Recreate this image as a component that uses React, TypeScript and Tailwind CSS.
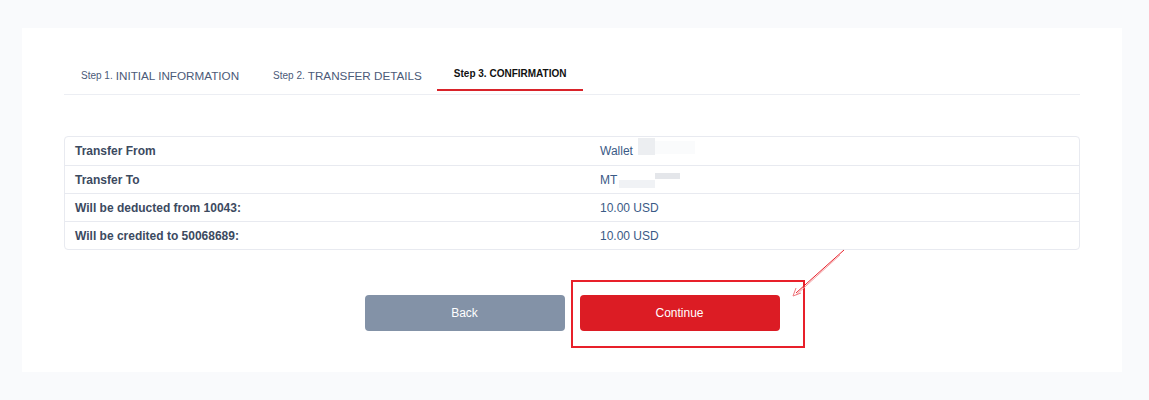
import React from "react";

const rows = [
  { label: "Transfer From", value: "Wallet", mask: "wallet" },
  { label: "Transfer To", value: "MT", mask: "mt" },
  { label: "Will be deducted from 10043:", value: "10.00 USD" },
  { label: "Will be credited to 50068689:", value: "10.00 USD" },
];

export default function App() {
  return (
    <div
      className="min-h-[400px] bg-[#f9fafc] pt-[28px] pl-[22px]"
      style={{ fontFamily: '"Liberation Sans", Arial, sans-serif' }}
    >
      <div className="relative w-[1100px] h-[344px] bg-white px-[42px]">
        {/* steps */}
        <div className="flex h-[67px] border-b border-[#eceef3]">
          <div className="flex items-center h-[63px] px-[17px] pt-[32px] text-[#4b5a78] whitespace-nowrap">
            <span className="text-[10px] mr-[3px]">Step 1.</span>
            <span className="text-[11.7px]">INITIAL INFORMATION</span>
          </div>
          <div className="flex items-center h-[63px] pl-[17px] pr-[15px] pt-[32px] text-[#4b5a78] whitespace-nowrap">
            <span className="text-[10px] mr-[3px]">Step 2.</span>
            <span className="text-[11.7px]">TRANSFER DETAILS</span>
          </div>
          <div className="flex items-center h-[63px] px-[17px] pt-[30px] border-b-[2px] border-[#d9232a] whitespace-nowrap">
            <span className="text-[10px] font-bold text-[#111]">Step 3. CONFIRMATION</span>
          </div>
        </div>

        {/* summary table */}
        <div className="mt-[41px] border border-[#e8eaf0] rounded-[4px]">
          {rows.map((r, i) => (
            <div
              key={r.label}
              className={`flex h-[28px] items-center ${i > 0 ? "border-t border-[#e8eaf0]" : ""}`}
            >
              <div className="w-[535px] pl-[10px] text-[12px] font-bold text-[#3c4a5f]">{r.label}</div>
              <div className="relative flex-1 text-[12px] text-[#3a5a86]">
                {r.value}
                {r.mask === "wallet" && (
                  <>
                    <span className="absolute left-[38px] top-[-4px] w-[17px] h-[17px] bg-[#eceef1]" />
                    <span className="absolute left-[55px] top-[-1px] w-[40px] h-[13px] bg-[#fafbfc]" />
                  </>
                )}
                {r.mask === "mt" && (
                  <>
                    <span className="absolute left-[19px] top-[9px] w-[36px] h-[8px] bg-[#f0f2f5]" />
                    <span className="absolute left-[55px] top-[2px] w-[25px] h-[6px] bg-[#e4e6ea]" />
                  </>
                )}
              </div>
            </div>
          ))}
        </div>

        {/* actions */}
        <div className="flex justify-center gap-[15px] mt-[45px]">
          <button className="w-[200px] h-[36px] rounded-[4px] bg-[#8392a7] text-white text-[12px]">Back</button>
          <button className="w-[200px] h-[36px] rounded-[4px] bg-[#dc1c24] text-white text-[12px]">Continue</button>
        </div>

        {/* annotation overlay */}
        <div className="absolute left-[549px] top-[252px] w-[234px] h-[68px] border-2 border-[#e8202a]" />
        <svg className="absolute left-[738px] top-[215px]" width="100" height="90" viewBox="0 0 100 90">
          <line x1="84" y1="7" x2="36" y2="50" stroke="#e8202a" strokeWidth="1" />
          <line x1="80" y1="12" x2="36" y2="52" stroke="#f3a0a3" strokeWidth="1" />
          <path d="M33 53 L36 45 M33 53 L41 50" stroke="#f07a80" strokeWidth="1" fill="none" />
        </svg>
      </div>
    </div>
  );
}
